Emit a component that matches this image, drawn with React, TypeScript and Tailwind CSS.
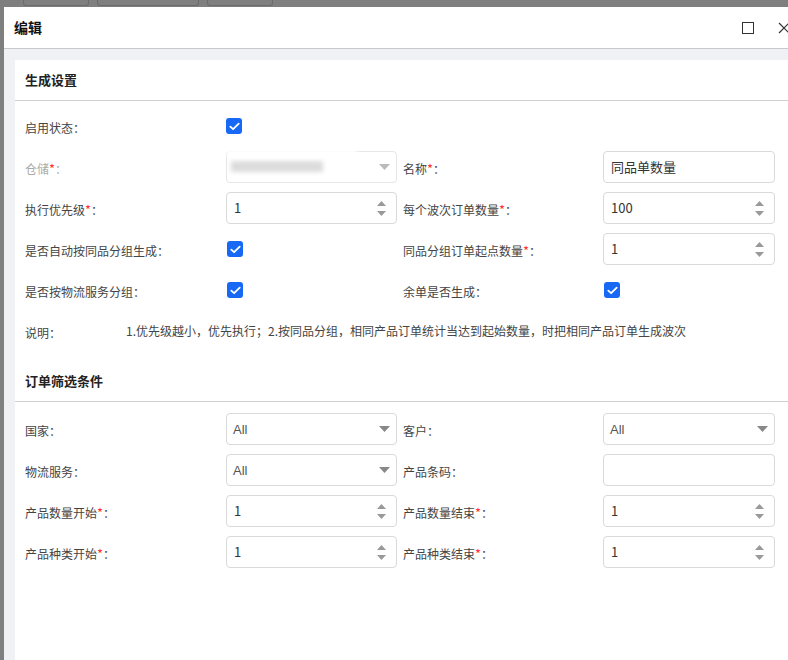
import React from "react";

const font = { fontFamily: '"Noto Sans CJK SC", "Noto Sans", sans-serif' };

function Label({ text, required, disabled }: { text: string; required?: boolean; disabled?: boolean }) {
  return (
    <span className={`text-[12px] ${disabled ? "text-[#aaa]" : "text-[#444]"}`}>
      {text}
      {required ? <span className="text-[13px] text-[#f33]">*</span> : null}：
    </span>
  );
}

function Check() {
  return (
    <span className="flex h-[16px] w-[16px] items-center justify-center rounded-[3px] bg-[#1768f5]">
      <svg width="11" height="9" viewBox="0 0 11 9" fill="none">
        <path d="M1.3 4.6 L4.1 7.2 L9.7 1.6" stroke="white" strokeWidth="1.8" strokeLinecap="round" strokeLinejoin="round" />
      </svg>
    </span>
  );
}

function Box({ children, w }: { children?: React.ReactNode; w: string }) {
  return (
    <div className={`relative flex h-[32px] ${w} items-center rounded-[4px] border border-[#d9d9d9] bg-white pl-[7px] pr-[10px] text-[13px] text-[#333]`}>
      {children}
    </div>
  );
}

function NumberBox({ value, w }: { value: string; w: string }) {
  return (
    <Box w={w}>
      <span className="flex-1">{value}</span>
      <span className="flex flex-col items-center gap-[5px]">
        <svg width="9" height="5" viewBox="0 0 9 5">
          <path d="M0 5 L4.5 0 L9 5 Z" fill="#999" />
        </svg>
        <svg width="9" height="5" viewBox="0 0 9 5">
          <path d="M0 0 L4.5 5 L9 0 Z" fill="#999" />
        </svg>
      </span>
    </Box>
  );
}

function SelectBox({ value, w, disabled }: { value?: string; w: string; disabled?: boolean }) {
  return (
    <div className={`relative flex h-[32px] ${w} items-center rounded-[4px] border ${disabled ? "border-[#e6e6e6]" : "border-[#d9d9d9]"} bg-white pl-[6px] pr-[6px] text-[13px] text-[#555]`}>
      <span className="flex-1 pt-[1px]" style={{ fontFamily: '"Liberation Sans", Arial, sans-serif' }}>
        {value}
      </span>
      {disabled ? (
        <span className="absolute left-[4px] top-[9px] h-[11px] w-[92px] bg-[#dcdcdc] blur-[2px]" />
      ) : null}
      {disabled ? <span className="absolute -top-[3px] left-[0px] h-[8px] w-[130px] bg-white blur-[2px]" /> : null}
      <svg width="11" height="6" viewBox="0 0 11 6">
        <path d="M0 0 L11 0 L5.5 6 Z" fill={disabled ? "#bbb" : "#888"} />
      </svg>
    </div>
  );
}

function Row({ children }: { children: React.ReactNode }) {
  return <div className="flex h-[32px] items-center">{children}</div>;
}

function Cell1({ children }: { children: React.ReactNode }) {
  return <div className="w-[201px] shrink-0">{children}</div>;
}
function Cell2({ children }: { children: React.ReactNode }) {
  return <div className="ml-[6px] w-[200px] shrink-0">{children}</div>;
}

function SectionTitle({ text }: { text: string }) {
  return (
    <div className="flex h-[41px] items-center border-b border-[#cfcfcf] pl-[10px] text-[13px] font-bold text-[#222]">
      {text}
    </div>
  );
}

export default function App() {
  return (
    <div className="relative h-[660px] w-[788px] overflow-hidden bg-[#7f7f7f]" style={font}>
      <div className="flex h-[7px]">
        <div className="ml-[23px] h-[6px] w-[66px] rounded-b-[3px] border border-t-0 border-[#6b6b6b]" />
        <div className="ml-[8px] h-[6px] w-[102px] rounded-b-[3px] border border-t-0 border-[#6b6b6b]" />
        <div className="ml-[8px] h-[6px] w-[66px] rounded-b-[3px] border border-t-0 border-[#6b6b6b]" />
      </div>
      <div className="ml-[4px] flex h-[653px] w-[800px] flex-col bg-white">
        <div className="flex h-[42px] shrink-0 items-center border-b border-[#c8c8c8] pl-[10px]">
          <span className="text-[14px] font-bold text-[#111]">编辑</span>
          <span className="ml-auto h-[12px] w-[12px] border-[1.5px] border-[#333]" />
          <svg className="ml-[24px] mr-[14px]" width="12" height="12" viewBox="0 0 12 12">
            <path d="M1 1 L11 11 M11 1 L1 11" stroke="#333" strokeWidth="1.2" />
          </svg>
        </div>
        <div className="flex-1 bg-[#eff1f5] pl-[11px] pt-[11px]">
          <div className="h-full bg-white">
            <SectionTitle text="生成设置" />
            <div className="flex flex-col gap-[9px] pl-[10px] pt-[9px]">
              <Row>
                <Cell1>
                  <Label text="启用状态" />
                </Cell1>
                <Check />
              </Row>
              <Row>
                <Cell1>
                  <Label text="仓储" required disabled />
                </Cell1>
                <SelectBox w="w-[171px]" disabled />
                <Cell2>
                  <Label text="名称" required />
                </Cell2>
                <Box w="w-[172px]">同品单数量</Box>
              </Row>
              <Row>
                <Cell1>
                  <Label text="执行优先级" required />
                </Cell1>
                <NumberBox value="1" w="w-[171px]" />
                <Cell2>
                  <Label text="每个波次订单数量" required />
                </Cell2>
                <NumberBox value="100" w="w-[172px]" />
              </Row>
              <Row>
                <Cell1>
                  <Label text="是否自动按同品分组生成" />
                </Cell1>
                <div className="w-[171px] pl-[1px]">
                  <Check />
                </div>
                <Cell2>
                  <Label text="同品分组订单起点数量" required />
                </Cell2>
                <NumberBox value="1" w="w-[172px]" />
              </Row>
              <Row>
                <Cell1>
                  <Label text="是否按物流服务分组" />
                </Cell1>
                <div className="w-[171px] pl-[1px]">
                  <Check />
                </div>
                <Cell2>
                  <Label text="余单是否生成" />
                </Cell2>
                <div className="pl-[1px]">
                  <Check />
                </div>
              </Row>
              <Row>
                <div className="w-[101px] shrink-0">
                  <Label text="说明" />
                </div>
                <span className="text-[12px] text-[#444]">
                  1.优先级越小，优先执行；2.按同品分组，相同产品订单统计当达到起始数量，时把相同产品订单生成波次
                </span>
              </Row>
            </div>
            <div className="mt-[14px]">
              <SectionTitle text="订单筛选条件" />
            </div>
            <div className="flex flex-col gap-[9px] pl-[10px] pt-[11px]">
              <Row>
                <Cell1>
                  <Label text="国家" />
                </Cell1>
                <SelectBox value="All" w="w-[171px]" />
                <Cell2>
                  <Label text="客户" />
                </Cell2>
                <SelectBox value="All" w="w-[172px]" />
              </Row>
              <Row>
                <Cell1>
                  <Label text="物流服务" />
                </Cell1>
                <SelectBox value="All" w="w-[171px]" />
                <Cell2>
                  <Label text="产品条码" />
                </Cell2>
                <Box w="w-[172px]" />
              </Row>
              <Row>
                <Cell1>
                  <Label text="产品数量开始" required />
                </Cell1>
                <NumberBox value="1" w="w-[171px]" />
                <Cell2>
                  <Label text="产品数量结束" required />
                </Cell2>
                <NumberBox value="1" w="w-[172px]" />
              </Row>
              <Row>
                <Cell1>
                  <Label text="产品种类开始" required />
                </Cell1>
                <NumberBox value="1" w="w-[171px]" />
                <Cell2>
                  <Label text="产品种类结束" required />
                </Cell2>
                <NumberBox value="1" w="w-[172px]" />
              </Row>
            </div>
          </div>
        </div>
      </div>
    </div>
  );
}
